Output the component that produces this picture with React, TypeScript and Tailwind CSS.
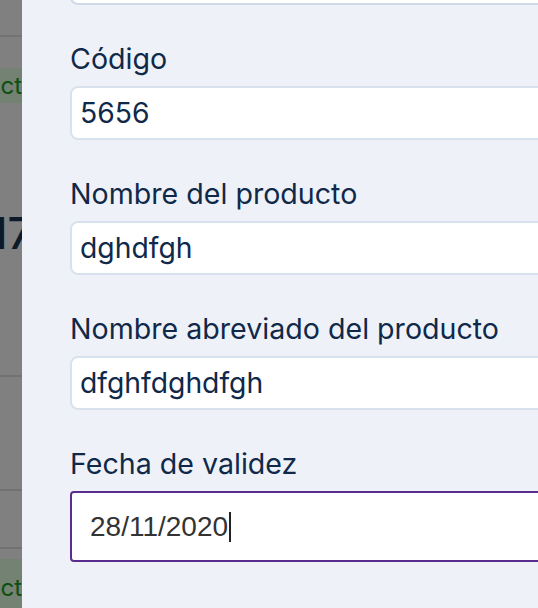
import React from 'react';

const font = "font-['Inter','Noto_Sans',sans-serif]";

interface FieldProps {
  label: string;
  value: string;
}

const Field: React.FC<FieldProps> = ({ label, value }) => (
  <div className="mt-[37px] flex flex-col">
    <label className="mb-[10px] text-[28.6px] leading-[34px] text-[#10294a]">{label}</label>
    <div className="flex h-[54px] w-[540px] items-center rounded-[8px] border-2 border-[#d8e1ee] bg-white px-[8px] text-[28.3px] text-[#10294a]">
      {value}
    </div>
  </div>
);

const App: React.FC = () => {
  return (
    <div className={`flex h-[608px] w-[538px] overflow-hidden ${font}`}>
      {/* page behind the backdrop */}
      <div className="flex w-[22px] shrink-0 flex-col overflow-hidden bg-[#808080]">
        <div className="h-[35px]" />
        <div className="h-[2px] bg-[#737373]" />
        <div className="h-[31px]" />
        <div className="flex h-[35px] items-center overflow-hidden bg-[#738273]">
          <span className="-ml-[16px] whitespace-nowrap text-[24px] text-[#0d4f10]">Activo</span>
        </div>
        <div className="h-[110px]" />
        <div className="flex h-[40px] items-center overflow-hidden">
          <span className="-ml-[29px] whitespace-nowrap text-[44px] font-medium leading-none text-[#0d1a2a]">117</span>
        </div>
        <div className="h-[122px]" />
        <div className="h-[2px] bg-[#727272]" />
        <div className="h-[112px]" />
        <div className="h-[2px] bg-[#727272]" />
        <div className="h-[56px]" />
        <div className="h-[2px] bg-[#727272]" />
        <div className="h-[10px]" />
        <div className="flex flex-1 items-end overflow-hidden bg-[#738273] pb-[2px]">
          <span className="-ml-[16px] whitespace-nowrap text-[24px] text-[#0d4f10]">Activo</span>
        </div>
      </div>

      {/* side panel */}
      <div className="flex-1 overflow-hidden bg-[#eef2f8] pl-[48px]">
        <div className="-mt-[50px] h-[55px] w-[540px] rounded-[8px] border-2 border-[#d0d9e6] bg-white" />
        <Field label="Código" value="5656" />
        <Field label="Nombre del producto" value="dghdfgh" />
        <Field label="Nombre abreviado del producto" value="dfghfdghdfgh" />
        <div className="mt-[37px] flex flex-col">
          <label className="mb-[10px] text-[28.6px] leading-[34px] text-[#10294a]">Fecha de validez</label>
          <div className="flex h-[71px] w-[540px] items-center rounded-[4px] border-2 border-[#5b2c8f] bg-white pl-[18px] font-['Liberation_Sans',Arial,sans-serif] text-[28px] text-[#333333]">
            28/11/2020
            <span className="ml-[1px] h-[30px] w-[2px] bg-[#222222]" />
          </div>
        </div>
      </div>
    </div>
  );
};

export default App;
